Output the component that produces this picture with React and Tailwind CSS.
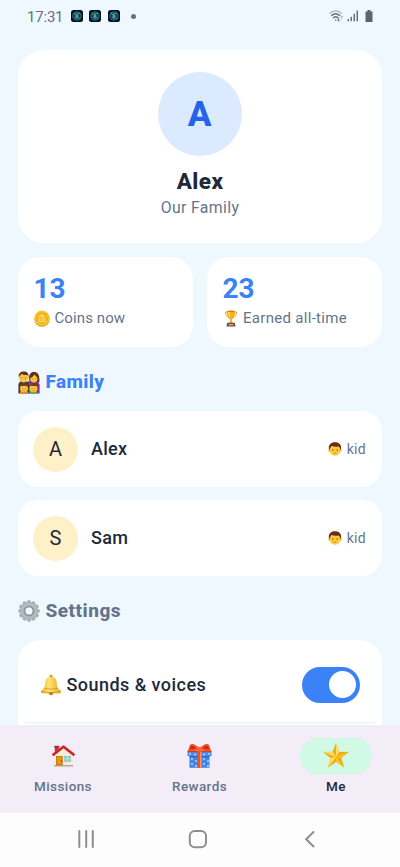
import React from "react";

const Coin = () => (
  <svg viewBox="0 0 16 17" className="h-[17px] w-4 shrink-0">
    <ellipse cx="8" cy="9" rx="7.7" ry="7.7" fill="#d99a1c" />
    <circle cx="8" cy="8.2" r="7.6" fill="#fbc52d" />
    <circle cx="8" cy="8.2" r="5.9" fill="#edb01f" />
    <path d="M4 6.6 8 4.2l4 2.4zM4.6 7.3h1v3.4h-1zM6.7 7.3h1v3.4h-1zM8.6 7.3h1v3.4h-1zM10.5 7.3h1v3.4h-1zM4 11h8v1H4z" fill="#ffe27a" />
  </svg>
);

const Trophy = () => (
  <svg viewBox="0 0 12 17" className="h-[17px] w-3 shrink-0">
    <path d="M2 2H.6c-.2 3 1 5 3.6 5.400M10 2h1.400c.2 3-1 5-3.600 5.400" fill="none" stroke="#eda21b" strokeWidth="1" />
    <path d="M2 1h8c.2 4-.8 7.500-3.200 8.300L7 11.500l1.400 2h-4.800l1.400-2 .2-2.200C2.800 8.500 1.800 5 2 1z" fill="#f7ae1e" />
    <path d="M3.300 2h1.500c0 3 .3 4.800 1 6.300C4.200 7.300 3.400 5 3.300 2z" fill="#ffe18a" />
    <ellipse cx="6" cy="1.200" rx="4" ry=".7" fill="#c97d13" />
    <path d="M2.200 12.800h7.600l.8 3.700H1.400z" fill="#7b4c42" />
    <path d="M3.800 14h4.400v1.300H3.800z" fill="#d3a99a" />
  </svg>
);

const FamilyIcon = () => (
  <svg viewBox="0 0 22 23" className="h-[23px] w-[22px] shrink-0">
    <path d="M11.500 12C10.500 5 12 .9 16 .9s6 3.600 5.300 10.600z" fill="#6b2f20" />
    <path d="M2 10.500h9.200v12.100H.4V13z" fill="#453c3c" />
    <path d="M11.200 11h8.800l1.600 2.500v9.100H11.200z" fill="#862aa8" />
    <circle cx="5.700" cy="6.500" r="4.900" fill="#f9c43a" />
    <path d="M.8 6C.3 2.200 2.600.4 5.800.4S11 2.400 10.500 6l-1-2c-3 .3-5-.3-6-.9L1.700 5z" fill="#67301f" />
    <ellipse cx="15.800" cy="7.200" rx="3.700" ry="4.300" fill="#f9c43a" />
    <path d="M11.300 8C11 3 13 1 16 1s5.200 2.500 4.700 7C19.500 6.500 17.500 5 16.600 3.500 15.500 5.400 13 6.500 11.300 8z" fill="#67301f" />
    <path d="M4 6.500v.8M7.400 6.500v.8M14.300 7.500v.8M17.500 7.500v.8" stroke="#70492f" strokeWidth=".8" />
    <path d="M2 20.200h8v2.500H2z" fill="#f47c21" />
    <path d="M12 20.200h7v2.500h-7z" fill="#55ad43" />
    <circle cx="6" cy="17.200" r="4" fill="#f9c43a" />
    <circle cx="15.500" cy="17.200" r="4" fill="#f9c43a" />
    <path d="M1.800 17c-.2-3.500 1.500-5 4.200-5s4.400 1.500 4.200 5L9 15c-2 .2-4.700.1-6-.2zM11.300 17c-.2-3.500 1.500-5 4.200-5s4.400 1.500 4.200 5l-1.300-2c-1.500.1-4.500.1-5.900-.2z" fill="#763b20" />
    <path d="M4.500 17.300v.8M7.600 17.300v.8M14 17.300v.8M17 17.300v.8" stroke="#70492f" strokeWidth=".7" />
    <path d="M5.300 19.700h1.500M14.800 19.700h1.500" stroke="#b76030" strokeWidth=".6" />
  </svg>
);

const Gear = () => (
  <svg viewBox="-11 -11 22 22" className="mb-0.5 h-[22px] w-[22px] shrink-0">
    {[0, 30, 60, 90, 120, 150, 180, 210, 240, 270, 300, 330].map((a) => (
      <path key={a} d="M-2.300-7.500-1.500-10.700H1.500L2.300-7.500z" fill="#a7b0b3" transform={`rotate(${a})`} />
    ))}
    <circle r="6.300" fill="none" stroke="#a9b2b5" strokeWidth="5" />
    <circle r="6.900" fill="none" stroke="#b5bec1" strokeWidth="1.600" />
    <circle r="4.500" fill="none" stroke="#8b969a" strokeWidth="1.600" />
  </svg>
);

const Bell = () => (
  <svg viewBox="0 0 22 22" className="h-[22px] w-[22px] shrink-0">
    <defs>
      <linearGradient id="bell" x1="0" x2="1"><stop stopColor="#f1b41e" /><stop offset=".4" stopColor="#ffe275" /><stop offset="1" stopColor="#eaaa13" /></linearGradient>
    </defs>
    <circle cx="11" cy="2.300" r="1.500" fill="#d68a1c" />
    <path d="M9.600 2.800h2.800c3.300 1 4.200 3 4.400 6.500.2 3.400 1 5.500 4 7.700.8 1.300-.3 2.400-1.500 2.400H2.700C1 19.400.4 18 1.200 17c3-2.200 3.800-4.300 4-7.700.2-3.500 1.100-5.500 4.400-6.500z" fill="url(#bell)" />
    <path d="M1.200 17.200c5 2 14.600 2 19.600 0M4.300 14.200c4 1.200 9.400 1.200 13.400 0" fill="none" stroke="#cf9420" strokeWidth=".8" />
    <path d="M8.700 18.300h4.600c.2 1.700-.8 3-2.300 3s-2.500-1.300-2.300-3z" fill="#be7e20" />
  </svg>
);

const Boy = () => (
  <svg viewBox="0 0 14 14" className="h-3.5 w-3.5 shrink-0">
    <circle cx="1.500" cy="8.500" r="1.200" fill="#efb12c" />
    <circle cx="12.500" cy="8.500" r="1.200" fill="#efb12c" />
    <ellipse cx="7" cy="8" rx="5.600" ry="5.800" fill="#fdca3e" />
    <path d="M1 7.500C.1 3 2.800.3 7 .3s6.900 2.700 6 7.200h-.8c-.2-1.400-.7-2.300-1.500-2.900-2.700.5-5.200.3-7.200-.5-.8.8-1.400 2-1.600 3.400z" fill="#6b2d19" />
    <circle cx="4.800" cy="8" r=".65" fill="#5d4332" />
    <circle cx="9.200" cy="8" r=".65" fill="#5d4332" />
    <path d="M6 11.200h2" stroke="#e06a38" strokeWidth=".8" strokeLinecap="round" />
  </svg>
);

const House = () => (
  <svg viewBox="0 0 25 24" className="h-6 w-[25px]">
    <path d="M3.800 2h4v7h-4z" fill="#be3330" />
    <path d="M3.200 11 12.500 4 22 11v10.800H3.200z" fill="#f5eddb" />
    <path d="M3.200 21H22v1.500H3.200z" fill="#b3a79b" />
    <path d="M5 12h6.800v9.500H5z" fill="#ce800e" />
    <path d="M6.300 13h4.200v7H6.300z" fill="#e39a20" />
    <circle cx="10.600" cy="17" r=".7" fill="#744819" />
    <path d="M13.300 12h6.600v5.700h-6.600z" fill="#b5aa95" />
    <path d="M13.700 12.300h5.800v4.800h-5.800z" fill="#64d6e4" />
    <path d="M16.600 12v5M13.500 14.800h6.200" stroke="#eee3ca" strokeWidth=".8" />
    <path d="m1.600 11.300 10.900-8.600 10.900 8.600" fill="none" stroke="#ca1f27" strokeWidth="2.500" strokeLinejoin="round" />
    <path d="m1.500 10 11-8.500 11 8.500" fill="none" stroke="#ef4445" strokeWidth=".7" />
    <path d="M3.300 1.800h5v1.600h-5z" fill="#982f31" />
  </svg>
);

const Gift = () => (
  <svg viewBox="0 0 25 26" className="h-[26px] w-[25px]">
    <path d="M2.500 10h20v14.800h-20z" fill="#3f83eb" />
    <path d="M.5 7.800h24v5.400H.5z" fill="#4b8df1" />
    {[[5,16],[9,18],[5,21],[9,23],[17,16],[21,18],[17,21],[21,23],[3,10.800],[8,11.500],[17,11.500],[22,10.800]].map(([x,y]) => <circle key={`${x}-${y}`} cx={x} cy={y} r="1" fill="#b3dcff" />)}
    <path d="M2.500 13.200h20v1h-20z" fill="#2b61b5" />
    <path d="M10.600 8h4v16.800h-4z" fill="#f4511e" />
    <path d="M13 8h1.600v16.800H13z" fill="#ff9070" />
    <path d="M12.500 5.500C9 2 5.500-.1 3.300 1.700 2 2.900 2.600 5.200.7 7.500c4.800.7 8.600.4 11.800-2zm0 0c3.500-3.500 7-5.600 9.200-3.800 1.300 1.200.7 3.500 2.600 5.800-4.800.7-8.600.4-11.800-2z" fill="#f04b1d" />
    <path d="M3 5.700c2.500.3 4.500 0 6-.8-1.500-1.300-3-2-4.600-2zM22 5.700c-2.500.3-4.500 0-6-.8 1.500-1.300 3-2 4.600-2z" fill="#b92b16" />
    <path d="M.7 7.600h23.600v1.600H.7z" fill="#d63b16" />
    <rect x="9.800" y="3.700" width="5.400" height="5" rx="1.500" fill="#ff6537" />
  </svg>
);

const Star = () => (
  <svg viewBox="0 0 26 26" className="h-[26px] w-[26px]">
    <path d="M13 .7 16.100 9l9.300.2-7.300 5.700 2.700 9.200L13 18.800l-7.800 5.300 2.700-9.200L.6 9.200 9.900 9z" fill="#fbc520" stroke="#ecb11a" strokeWidth=".4" />
    <path d="M13 .7V14L9.900 9zM.6 9.200 13 14l-5.100.9zM5.200 24.100 13 14v4.800zM20.800 24.100 13 14l5.100.9zM25.400 9.200 13 14l3.100-5z" fill="#efac1c" />
    <path d="M13 1v13l3.100-5zM1 9.300 13 14 9.900 9zM7.900 14.900 13 14 5.500 23.700z" fill="#ffdf60" />
  </svg>
);

const AppBadge = () => (
  <svg viewBox="0 0 12 12" className="h-3 w-3">
    <rect width="12" height="12" rx="2.500" fill="#07101d" />
    <circle cx="6" cy="6" r="4.100" fill="#123950" stroke="#198d8c" strokeWidth=".9" />
    <path d="M3 3.400 5.300 5M7 4l2-1M3.800 8l1.700-1.300M7 7l1.600 1.600" stroke="#23bda0" />
    <path d="M2.200 6v2l1.500 1.500" fill="none" stroke="#393c9d" />
    <path d="M6 3v6M4.500 6h3" stroke="#a6c8cb" strokeWidth=".8" />
  </svg>
);

function StatusBar() {
  return (
    <header className="flex h-[50px] items-start pl-[27px] pr-[26px] pt-[7px] text-[#697075]">
      <span className="w-11 text-[15px] leading-5 tracking-[-0.200px]">17:31</span>
      <div className="mt-[3px] flex gap-[6.300px]"><AppBadge /><AppBadge /><AppBadge /></div>
      <span className="ml-[11px] mt-[6.500px] h-[5px] w-[5px] rounded-full bg-[#697075]" />
      <svg viewBox="0 0 45 14" className="ml-auto mt-[2px] h-3.5 w-[45px]">
        <g fill="none" stroke="#697075" strokeLinecap="round">
          <path d="M1 4.300c3.300-3 8-3 11.400 0" strokeWidth="1.500" opacity=".45" />
          <path d="M2.700 6.500c2.400-2.200 5.600-2.200 8 0M4.500 8.700c1.400-1.200 3-1.200 4.300 0" strokeWidth="1.500" />
          <path d="M6.700 11h.1" strokeWidth="1.500" />
          <path d="M9.600 9v3m-1-1 1 1 1-1" strokeWidth=".9" />
          <path d="M12.800 10V7m-1 1 1-1 1 1" strokeWidth=".8" opacity=".5" />
        </g>
        <path d="M18.500 10h1.500v2.300h-1.500zM21.500 7.700H23v4.600h-1.500zM24.500 4.800H26v7.500h-1.500zM27.500 1.500H29v10.800h-1.500z" fill="#697075" />
        <path d="M38.500 1h3v1.500h2V13h-7V2.500h2z" fill="#5e6467" />
      </svg>
    </header>
  );
}

function Stat({ value, label, icon, spacing }) {
  return (
    <div className="h-[90px] flex-1 rounded-[22px] bg-white pl-[15.500px] pt-4">
      <div className="text-[28px] font-bold leading-8 text-[#3b82f6]">{value}</div>
      <div className={`flex h-[27px] items-center text-[15px] text-[#64748b] ${spacing}`}>{icon}<span>{label}</span></div>
    </div>
  );
}

function Member({ name }) {
  return (
    <div className="flex h-[76px] items-center rounded-[20px] bg-white pl-[15px] pr-4">
      <div className="flex h-[45px] w-[45px] items-center justify-center rounded-full bg-[#fef0c7] text-[20px] text-[#1e293b]">{name[0]}</div>
      <span className="mb-0.5 ml-[13px] text-[18px] font-medium tracking-[0.300px] text-[#1e293b]">{name}</span>
      <span className="ml-auto flex items-center gap-[5px] text-[14px] tracking-[0.300px] text-[#64748b]"><Boy />kid</span>
    </div>
  );
}

function NavItem({ label, icon, active }) {
  return (
    <div className="flex w-[72px] flex-col items-center">
      <div className={`flex h-9 w-[72px] items-center justify-center rounded-full ${active ? "bg-[#d1fae5]" : ""}`}>{icon}</div>
      <span className={`mt-[3px] text-[13.500px] font-medium leading-[18px] tracking-[0.400px] ${active ? "text-[#1e293b]" : "text-[#64748b]"}`}>{label}</span>
    </div>
  );
}

export default function App() {
  return (
    <div className="flex h-[867px] w-[400px] flex-col overflow-hidden bg-[#f0f8ff] font-['Roboto',sans-serif]">
      <StatusBar />
      <main className="h-[675px] shrink-0 overflow-hidden px-[18px]">
        <section className="flex h-[193px] flex-col items-center rounded-[26px] bg-white pt-[22px]">
          <div className="flex h-[84px] w-[84px] items-center justify-center rounded-full bg-[#dbeafe] pr-[1px] pt-[2px] text-[35px] font-extrabold text-[#2563eb]">A</div>
          <h1 className="mt-[11px] text-[22.500px] font-extrabold leading-[28px] tracking-[0.400px] text-[#1e293b]">Alex</h1>
          <p className="mt-[3px] text-[15.800px] leading-[20px] tracking-[0.350px] text-[#64748b]">Our Family</p>
        </section>
        <section className="mt-3.5 flex gap-3.5">
          <Stat value="13" label="Coins now" icon={<Coin />} spacing="gap-[5px] tracking-[0.100px]" />
          <Stat value="23" label="Earned all-time" icon={<span className="ml-[2.500px]"><Trophy /></span>} spacing="gap-1.5 tracking-[0.300px]" />
        </section>
        <h2 className="flex h-16 items-center gap-[5.500px] pt-[7px] text-[19px] font-extrabold tracking-[0.350px] text-[#3b82f6]"><FamilyIcon />Family</h2>
        <section className="flex flex-col gap-[13px]"><Member name="Alex" /><Member name="Sam" /></section>
        <h2 className="flex h-16 items-center gap-[5.500px] pt-[7px] text-[19px] font-extrabold tracking-[0.500px] text-[#64748b]"><Gear />Settings</h2>
        <section className="h-[200px] rounded-[22px] bg-white px-[6px]">
          <div className="flex h-[84px] items-center border-b-2 border-[#f0f8ff] px-4 pt-[7px]">
            <span className="-ml-[0.500px]"><Bell /></span>
            <span className="ml-[5px] text-[18px] font-medium tracking-[0.450px] text-[#1e293b]">Sounds &amp; voices</span>
            <div className="ml-auto flex h-9 w-[58px] items-center justify-end rounded-full bg-[#3b82f6] pr-1"><div className="h-[27px] w-[27px] rounded-full bg-white" /></div>
          </div>
        </section>
      </main>
      <nav className="flex h-[88px] shrink-0 justify-between bg-[#f3edf7] pl-[27px] pr-7 pt-[13px]">
        <NavItem label="Missions" icon={<House />} />
        <NavItem label="Rewards" icon={<Gift />} />
        <NavItem label="Me" icon={<Star />} active />
      </nav>
      <footer className="h-[54px] shrink-0 bg-[#fdfdfd]">
        <svg viewBox="0 0 400 54" className="h-[54px] w-full" fill="none" stroke="#8e8e8e" strokeWidth="2">
          <path d="M79.300 18v16M86.200 18v16M92.800 18v16" strokeLinecap="round" />
          <rect x="189.800" y="18" width="16.200" height="16.200" rx="5" />
          <path d="m313.500 19-7.300 7.300 7.300 7.200" strokeLinecap="round" />
        </svg>
      </footer>
    </div>
  );
}
